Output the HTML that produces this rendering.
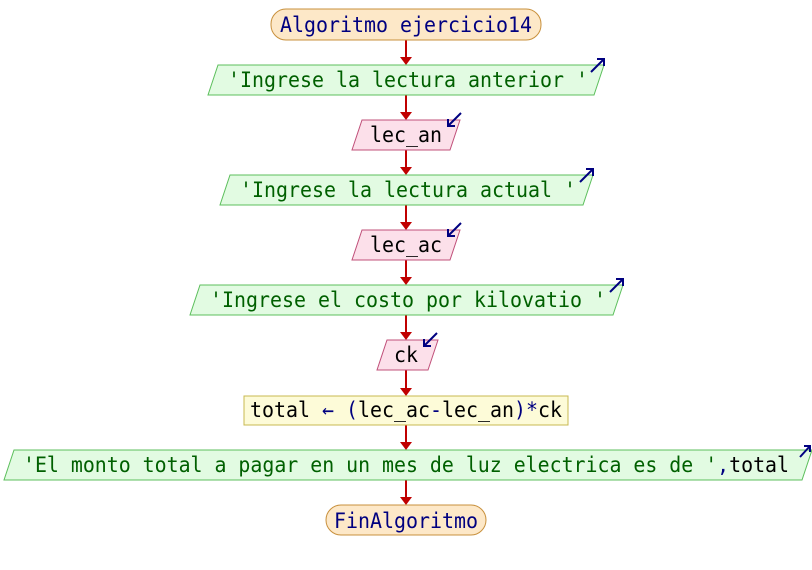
<!DOCTYPE html>
<html><head><meta charset="utf-8"><style>
html,body{margin:0;padding:0;background:#fff;width:812px;height:570px;overflow:hidden}
text{font-family:"DejaVu Sans Mono","Liberation Mono",monospace;font-size:21px}
</style></head><body>
<svg width="812" height="570" xmlns="http://www.w3.org/2000/svg">
<g stroke="#c00000" stroke-width="2" fill="none">
<line x1="406" y1="40" x2="406" y2="58"/>
<line x1="406" y1="95" x2="406" y2="113"/>
<line x1="406" y1="150" x2="406" y2="168"/>
<line x1="406" y1="205" x2="406" y2="223"/>
<line x1="406" y1="260" x2="406" y2="278"/>
<line x1="406" y1="315" x2="406" y2="333"/>
<line x1="406" y1="370" x2="406" y2="389"/>
<line x1="406" y1="425" x2="406" y2="443"/>
<line x1="406" y1="480" x2="406" y2="498"/>
</g>
<g fill="#c00000">
<polygon points="400,57 412,57 406,65"/>
<polygon points="400,112 412,112 406,120"/>
<polygon points="400,167 412,167 406,175"/>
<polygon points="400,222 412,222 406,230"/>
<polygon points="400,277 412,277 406,285"/>
<polygon points="400,332 412,332 406,340"/>
<polygon points="400,388 412,388 406,396"/>
<polygon points="400,442 412,442 406,450"/>
<polygon points="400,497 412,497 406,505"/>
</g>
<rect x="271" y="9" width="270" height="31" rx="15" fill="#fde8c8" stroke="#c8903c"/>
<text x="280" y="32" fill="#000080" textLength="252" lengthAdjust="spacingAndGlyphs">Algoritmo ejercicio14</text>
<polygon points="218,65 604,65 594,95 208,95" fill="#e2fbe2" stroke="#5cbf5c"/>
<text x="228" y="87" fill="#006000" textLength="360" lengthAdjust="spacingAndGlyphs">'Ingrese la lectura anterior '</text>
<polygon points="362,120 460,120 450,150 352,150" fill="#fce0ea" stroke="#c0507a"/>
<text x="370" y="142" fill="#000" textLength="72" lengthAdjust="spacingAndGlyphs">lec_an</text>
<polygon points="230,175 593,175 583,205 220,205" fill="#e2fbe2" stroke="#5cbf5c"/>
<text x="240" y="197" fill="#006000" textLength="336" lengthAdjust="spacingAndGlyphs">'Ingrese la lectura actual '</text>
<polygon points="362,230 460,230 450,260 352,260" fill="#fce0ea" stroke="#c0507a"/>
<text x="370" y="252" fill="#000" textLength="72" lengthAdjust="spacingAndGlyphs">lec_ac</text>
<polygon points="200,285 623,285 613,315 190,315" fill="#e2fbe2" stroke="#5cbf5c"/>
<text x="210" y="307" fill="#006000" textLength="396" lengthAdjust="spacingAndGlyphs">'Ingrese el costo por kilovatio '</text>
<polygon points="387,340 438,340 428,370 377,370" fill="#fce0ea" stroke="#c0507a"/>
<text x="394" y="362" fill="#000" textLength="24" lengthAdjust="spacingAndGlyphs">ck</text>
<rect x="244" y="396" width="324" height="29" fill="#fdfbd8" stroke="#c8b850"/>
<text x="250" y="417" fill="#000" textLength="312" lengthAdjust="spacingAndGlyphs"><tspan>total </tspan><tspan fill="#000080">← (</tspan><tspan>lec_ac</tspan><tspan fill="#000080">-</tspan><tspan>lec_an</tspan><tspan fill="#000080">)*</tspan><tspan>ck</tspan></text>
<polygon points="14,450 812,450 802,480 4,480" fill="#e2fbe2" stroke="#5cbf5c"/>
<text x="23" y="472" textLength="766" lengthAdjust="spacingAndGlyphs"><tspan fill="#006000">'El monto total a pagar en un mes de luz electrica es de '</tspan><tspan fill="#000080">,</tspan><tspan fill="#000">total</tspan></text>
<rect x="326" y="505" width="160" height="30" rx="15" fill="#fde8c8" stroke="#c8903c"/>
<text x="334" y="528" fill="#000080" textLength="144" lengthAdjust="spacingAndGlyphs">FinAlgoritmo</text>
<g stroke="#000080" stroke-width="2" fill="none">
<path d="M591,72 L604,59 M597,59 L604,59 L604,66"/>
<path d="M580,182 L593,169 M586,169 L593,169 L593,176"/>
<path d="M610,292 L623,279 M616,279 L623,279 L623,286"/>
<path d="M800,457 L810,446 M804,446 L810,446 L810,452"/>
<path d="M461,113 L448,126 M448,119 L448,126 L455,126"/>
<path d="M461,223 L448,236 M448,229 L448,236 L455,236"/>
<path d="M437,333 L424,346 M424,339 L424,346 L431,346"/>
</g>
</svg>
</body></html>
